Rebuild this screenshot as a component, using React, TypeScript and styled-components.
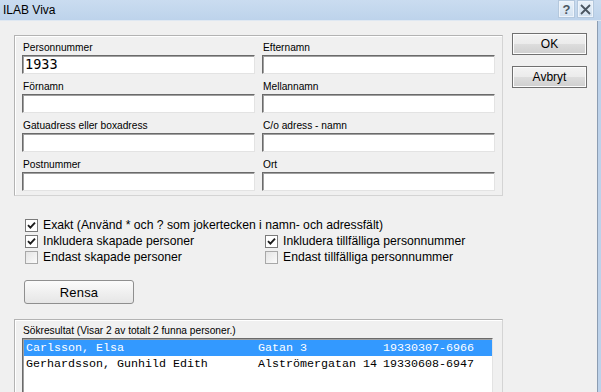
import { ReactElement } from "react";
import styled, { createGlobalStyle } from "styled-components";

const GlobalStyle = createGlobalStyle`
    html, body {
        margin: 0;
        padding: 0;
        background: #f0f0f0;
    }
    * {
        box-sizing: border-box;
    }
`;

const Window = styled.div`
    width: 601px;
    height: 392px;
    overflow: hidden;
    display: flex;
    flex-direction: column;
    font-family: "Liberation Sans", Arial, sans-serif;
    color: #000;
    background: #f0f0f0;
`;

const TitleBar = styled.div`
    height: 21px;
    flex: none;
    display: flex;
    align-items: center;
    justify-content: space-between;
    padding: 0 8px 0 3px;
    background: linear-gradient(to bottom, #cadcf0 0%, #bdd3eb 100%);
    border-bottom: 1px solid #dfe8f2;
`;

const TitleText = styled.span`
    font-size: 12px;
    line-height: 14px;
`;

const TitleButtons = styled.div`
    display: flex;
    gap: 4px;
    margin-top: -2px;
`;

const TitleButton = styled.div`
    width: 15px;
    height: 16px;
    display: flex;
    align-items: center;
    justify-content: center;
    background: linear-gradient(to bottom, #e9f1f9, #d3e2f1);
    border: 1px solid #eef4fb;
    box-shadow: 0 0 0 1px #b4c8dd;
    font-size: 13px;
    font-weight: bold;
    color: #4b5661;
`;

const Frame = styled.div`
    flex: 1;
    min-height: 0;
    display: flex;
    border-right: 3px solid #bdd2ea;
`;

const Body = styled.div`
    flex: 1;
    display: flex;
    gap: 9px;
    padding: 14px 10px 0 14px;
    border-right: 1px solid #8c9db2;
`;

const MainColumn = styled.div`
    width: 489px;
    display: flex;
    flex-direction: column;
`;

const ButtonColumn = styled.div`
    display: flex;
    flex-direction: column;
    gap: 11px;
    margin-top: -2px;
`;

const GroupBox = styled.div`
    border: 1px solid #b3b3b3;
    border-right-color: #d4d4d4;
    border-bottom-color: #d4d4d4;
    box-shadow: inset 1px 1px 0 #ffffff;
    padding: 6px 7px 4px 7px;
`;

const FieldGrid = styled.div`
    display: grid;
    grid-template-columns: 233px 233px;
    column-gap: 7px;
    row-gap: 7px;
`;

const Field = styled.div`
    display: flex;
    flex-direction: column;
`;

const FieldLabel = styled.label`
    font-size: 10.2px;
    line-height: 12px;
    height: 13px;
    padding-left: 1px;
    color: #000;
`;

const TextInput = styled.div`
    height: 19px;
    background: #fff;
    border: 1px solid;
    border-color: #6a6a6a #e3e3e3 #e3e3e3 #6a6a6a;
    box-shadow: inset 1px 1px 0 #a0a0a0;
    font-family: "DejaVu Sans Mono", "Liberation Mono", monospace;
    font-size: 13.5px;
    line-height: 17px;
    padding-left: 2px;
`;

const Options = styled.div`
    margin-top: 21px;
    padding-left: 11px;
    display: grid;
    grid-template-columns: 240px 1fr;
`;

const OptionRow = styled.div<{ $wide?: boolean }>`
    height: 16px;
    display: flex;
    align-items: center;
    gap: 5px;
    font-size: 12.2px;
    grid-column: ${(p) => (p.$wide ? "1 / span 2" : "auto")};
    white-space: nowrap;
`;

const CheckBox = styled.span<{ $checked: boolean }>`
    width: 13px;
    height: 13px;
    flex: none;
    display: flex;
    align-items: center;
    justify-content: center;
    border: 1px solid ${(p) => (p.$checked ? "#7a7a7a" : "#a8a8a8")};
    background: ${(p) =>
        p.$checked ? "#ffffff" : "linear-gradient(135deg, #e4e4e4, #fbfbfb)"};
`;

const RensaButton = styled.div`
    margin-top: 15px;
    margin-left: 10px;
    width: 110px;
    height: 24px;
    display: flex;
    align-items: center;
    justify-content: center;
    border: 1px solid #8f8f8f;
    border-radius: 3px;
    background: linear-gradient(to bottom, #fbfbfb 0%, #f0f0f0 50%, #e6e6e6 100%);
    font-size: 13px;
    letter-spacing: 0.2px;
`;

const DialogButton = styled.div`
    width: 75px;
    height: 22px;
    display: flex;
    align-items: center;
    justify-content: center;
    border: 1px solid #707070;
    box-shadow: inset 0 0 0 1px #fcfcfc;
    background: linear-gradient(to bottom, #f3f3f3 0%, #ebebeb 50%, #dddddd 51%, #cfcfcf 100%);
    font-size: 12px;
`;

const ResultGroup = styled.div`
    margin-top: 15px;
    flex: 1;
    border: 1px solid #b3b3b3;
    border-bottom: none;
    border-right-color: #d4d4d4;
    box-shadow: inset 1px 1px 0 #ffffff;
    padding: 6px 9px 0 7px;
    display: flex;
    flex-direction: column;
`;

const ResultLabel = styled.div`
    font-size: 10.2px;
    line-height: 12px;
    height: 13px;
    padding-left: 1px;
    margin-top: -1px;
`;

const ListBox = styled.div`
    flex: 1;
    background: #fff;
    border: 1px solid;
    border-color: #6a6a6a #e3e3e3 #e3e3e3 #6a6a6a;
    border-bottom: none;
    box-shadow: inset 1px 1px 0 #a0a0a0;
    padding: 1px 0 0 1px;
`;

const ListRow = styled.div<{ $selected?: boolean }>`
    height: 16px;
    display: flex;
    align-items: center;
    padding-left: 2px;
    font-family: "Liberation Mono", "Courier New", monospace;
    font-size: 11.67px;
    white-space: pre;
    background: ${(p) => (p.$selected ? "#3399ff" : "transparent")};
    color: ${(p) => (p.$selected ? "#ffffff" : "#000000")};
`;

const Cell = styled.span<{ $width?: number }>`
    width: ${(p) => (p.$width ? `${p.$width}px` : "auto")};
    flex: none;
`;

const fields = [
    ["Personnummer", "1933"],
    ["Efternamn", ""],
    ["Förnamn", ""],
    ["Mellannamn", ""],
    ["Gatuadress eller boxadress", ""],
    ["C/o adress - namn", ""],
    ["Postnummer", ""],
    ["Ort", ""],
];

const results = [
    { name: "Carlsson, Elsa", address: "Gatan 3", pnr: "19330307-6966", selected: true },
    { name: "Gerhardsson, Gunhild Edith", address: "Alströmergatan 14", pnr: "19330608-6947", selected: false },
];

function Check({ checked }: { checked: boolean }): ReactElement {
    return (
        <CheckBox $checked={checked}>
            {checked && (
                <svg width="9" height="9" viewBox="0 0 9 9">
                    <path d="M1 4.2 L3.4 6.6 L8 1.6" fill="none" stroke="#1c1c1c" strokeWidth="1.9" />
                </svg>
            )}
        </CheckBox>
    );
}

function App() {
    return (
        <Window>
            <GlobalStyle />
            <TitleBar>
                <TitleText>ILAB Viva</TitleText>
                <TitleButtons>
                    <TitleButton>?</TitleButton>
                    <TitleButton>
                        <svg width="11" height="11" viewBox="0 0 11 11">
                            <path d="M1 1 L10 10 M10 1 L1 10" stroke="#4b5661" strokeWidth="1.8" />
                        </svg>
                    </TitleButton>
                </TitleButtons>
            </TitleBar>
            <Frame>
                <Body>
                    <MainColumn>
                        <GroupBox>
                            <FieldGrid>
                                {fields.map(([label, value]) => (
                                    <Field key={label}>
                                        <FieldLabel>{label}</FieldLabel>
                                        <TextInput>{value}</TextInput>
                                    </Field>
                                ))}
                            </FieldGrid>
                        </GroupBox>
                        <Options>
                            <OptionRow $wide>
                                <Check checked />
                                Exakt (Använd * och ? som jokertecken i namn- och adressfält)
                            </OptionRow>
                            <OptionRow>
                                <Check checked />
                                Inkludera skapade personer
                            </OptionRow>
                            <OptionRow>
                                <Check checked />
                                Inkludera tillfälliga personnummer
                            </OptionRow>
                            <OptionRow>
                                <Check checked={false} />
                                Endast skapade personer
                            </OptionRow>
                            <OptionRow>
                                <Check checked={false} />
                                Endast tillfälliga personnummer
                            </OptionRow>
                        </Options>
                        <RensaButton>Rensa</RensaButton>
                        <ResultGroup>
                            <ResultLabel>Sökresultat (Visar 2 av totalt 2 funna personer.)</ResultLabel>
                            <ListBox>
                                {results.map((r) => (
                                    <ListRow key={r.pnr} $selected={r.selected}>
                                        <Cell $width={232}>{r.name}</Cell>
                                        <Cell $width={125}>{r.address}</Cell>
                                        <Cell>{r.pnr}</Cell>
                                    </ListRow>
                                ))}
                            </ListBox>
                        </ResultGroup>
                    </MainColumn>
                    <ButtonColumn>
                        <DialogButton>OK</DialogButton>
                        <DialogButton>Avbryt</DialogButton>
                    </ButtonColumn>
                </Body>
            </Frame>
        </Window>
    );
}

export default App;
